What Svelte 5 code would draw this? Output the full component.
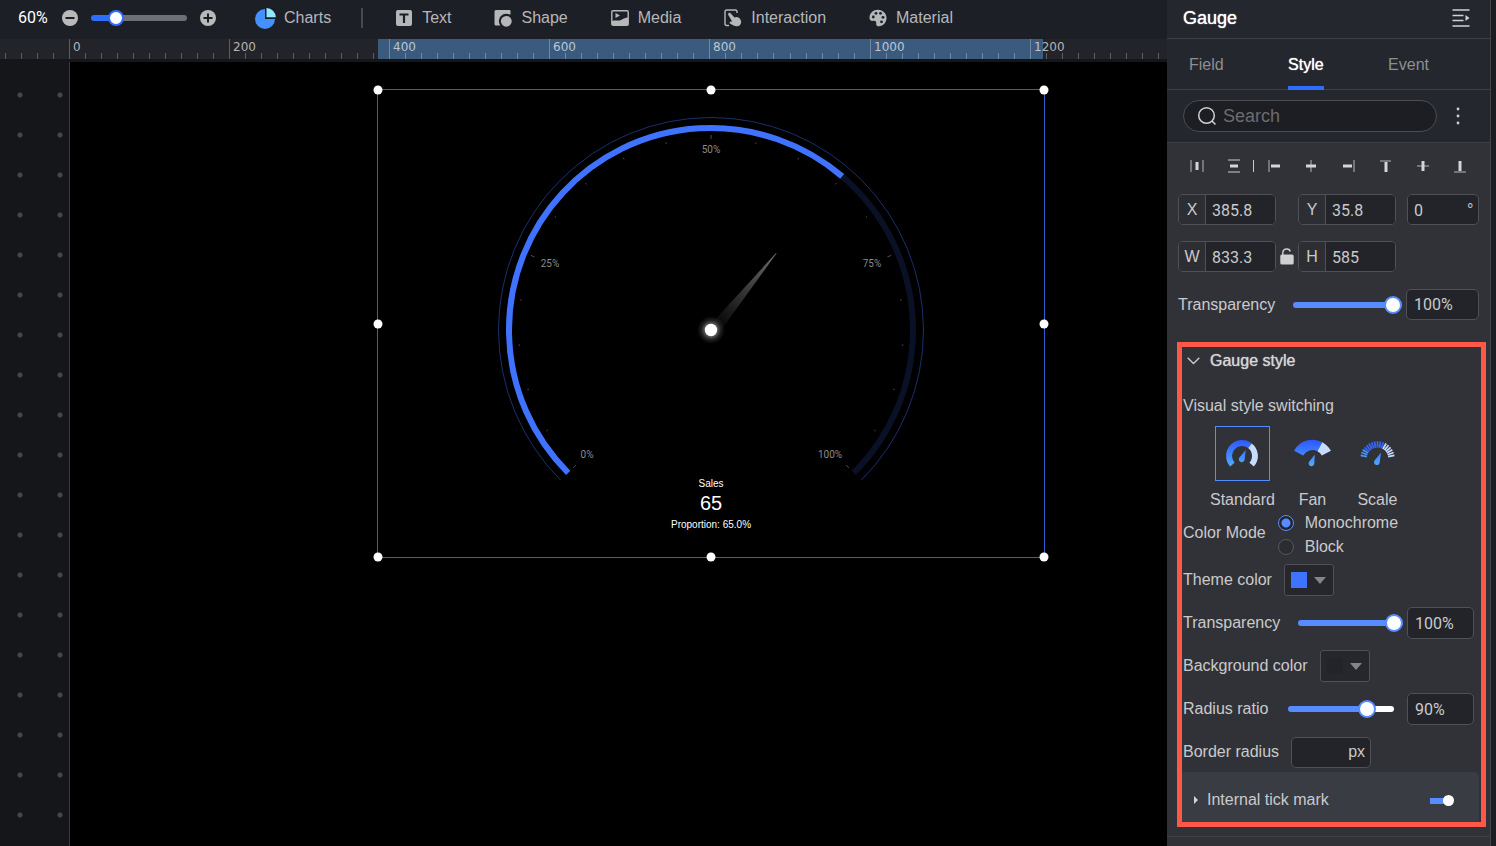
<script>
  let zoom = 60;
  let activeTab = "Style";
  let visualStyle = "Standard";
  let colorMode = "Monochrome";
  let opacity = 100;
  let gaugeOpacity = 100;
  let radiusRatio = 90;
  let tickMark = true;

  const tools = ["Text", "Shape", "Media", "Interaction", "Material"];
  const tabs = ["Field", "Style", "Event"];

  const rulerOrigin = 69;
  const rulerStep = 16;
  const rulerTicks = Array.from({ length: 74 }, (_, i) => i - 4);

  const handles = [
    [0, 0],
    [50, 0],
    [100, 0],
    [0, 50],
    [100, 50],
    [0, 100],
    [50, 100],
    [100, 100],
  ];

  const point = (cx, cy, r, deg) => {
    const a = (deg * Math.PI) / 180;
    return [cx + r * Math.sin(a), cy - r * Math.cos(a)];
  };

  // angles are clockwise from twelve o'clock
  const arc = (cx, cy, r, from, to) => {
    const [x1, y1] = point(cx, cy, r, from);
    const [x2, y2] = point(cx, cy, r, to);
    const large = to - from > 180 ? 1 : 0;
    return `M${x1} ${y1}A${r} ${r} 0 ${large} 1 ${x2} ${y2}`;
  };

  const spoke = (cx, cy, r1, r2, deg) => {
    const [x1, y1] = point(cx, cy, r1, deg);
    const [x2, y2] = point(cx, cy, r2, deg);
    return `M${x1} ${y1}L${x2} ${y2}`;
  };

  const sales = 65;
  const gaugeEnd = -135 + 270 * (sales / 100);
  const gaugeTicks = Array.from({ length: 21 }, (_, i) => i);
  const gaugeLabels = [
    { text: "0%", x: 209, y: 368 },
    { text: "25%", x: 172, y: 177 },
    { text: "50%", x: 333, y: 63 },
    { text: "75%", x: 494, y: 177 },
    { text: "100%", x: 452, y: 368 },
  ];

  const scaleTicks = Array.from({ length: 17 }, (_, i) => -80 + i * 10);

  const alignIcons = [
    { label: "Distribute horizontally", thin: "M3 3V15M15 3V15", thick: "M9 5V13" },
    { label: "Distribute vertically", thin: "M3 3H15M3 15H15", thick: "M5 9H13" },
    { label: "Align left", thin: "M4 3V15", thick: "M6 9H15" },
    { label: "Align center", thin: "M9 3V15", thick: "M4 9H14" },
    { label: "Align right", thin: "M15 3V15", thick: "M4 9H13" },
    { label: "Align top", thin: "M4 4H15", thick: "M10 5V15" },
    { label: "Align middle", thin: "M4 9H16", thick: "M10 4V14" },
    { label: "Align bottom", thin: "M4 15H16", thick: "M10 4V14" },
  ];

  const fill = (value, min, max) => (100 * (value - min)) / (max - min);
</script>

<div class="app">
  <main class="editor">
    <header class="toolbar">
      <output class="zoom-value">{zoom}%</output>
      <button type="button" class="zoom-btn" aria-label="Zoom out" on:click={() => (zoom = Math.max(10, zoom - 10))}>
        <svg width="16" height="16" viewBox="0 0 16 16">
          <circle cx="8" cy="8" r="8" fill="#b9b9ba" />
          <path d="M3.5 8H12.5" stroke="#1d1f27" stroke-width="2" />
        </svg>
      </button>
      <input
        class="slider zoom-slider"
        type="range"
        min="10"
        max="250"
        aria-label="Zoom"
        bind:value={zoom}
        style="--fill: {fill(zoom, 10, 250)}%"
      />
      <button type="button" class="zoom-btn" aria-label="Zoom in" on:click={() => (zoom = Math.min(250, zoom + 10))}>
        <svg width="16" height="16" viewBox="0 0 16 16">
          <circle cx="8" cy="8" r="8" fill="#b9b9ba" />
          <path d="M3.5 8H12.5M8 3.5V12.5" stroke="#1d1f27" stroke-width="2" />
        </svg>
      </button>

      <button type="button" class="tool charts">
        <svg width="21" height="21" viewBox="0 0 21 21">
          <path d="M10 1A10 10 0 1 0 20 11H10Z" fill="#4490ff" />
          <path d="M11.5 0A9.3 9.3 0 0 1 20.8 9.2H11.5Z" fill="#8feaff" />
        </svg>
        Charts
      </button>
      <span class="divider"></span>
      <nav class="tools">
        {#each tools as tool}
          <button type="button" class="tool">
            <svg width="18" height="18" viewBox="0 0 18 18" fill="#b6b7b9">
              {#if tool === "Text"}
                <rect x="1" y="1" width="16" height="16" rx="2" />
                <path d="M4.5 5.5H13.5M9 5V14" stroke="#1d1f27" stroke-width="2.2" />
              {:else if tool === "Shape"}
                <path d="M2 1H15.5Q16.5 1 16.5 2V5.5H11L6 16.5H2Q0.5 16.5 0.5 15V2.5Q0.5 1 2 1Z" />
                <circle cx="12" cy="12" r="7.2" fill="#1d1f27" />
                <circle cx="12.3" cy="12.3" r="5.4" />
              {:else if tool === "Media"}
                <rect x="0.8" y="1.8" width="16.4" height="14.4" rx="1.2" fill="none" stroke="#b6b7b9" stroke-width="1.4" />
                <path d="M1 12C5 10.5 7 12.5 10 11C13 9.5 14 8.5 17 8.5V16H1Z" />
                <path d="M4.5 4L9 6.5L4.5 9Z" />
              {:else if tool === "Interaction"}
                <path d="M13 4V2.5Q13 1 11.5 1H2.7Q1 1 1 2.7V14.5Q1 16.5 2.7 16.5H5" fill="none" stroke="#b6b7b9" stroke-width="1.4" />
                <path d="M4.5 4.2C5.5 3.2 6.7 4.2 7.2 5L10.5 8.5C13 7.2 15.5 8.5 16.7 11C17.6 13 17.3 14.8 15.8 16.2C14 17.8 11.5 17.5 9.5 16.6L6 14.4C5 13.3 6 12.3 7.5 12.6L8.3 12.8L4.6 6.6C4 5.6 4 4.8 4.5 4.2Z" />
              {:else}
                <path d="M9 0.8C4.2 0.8 0.5 4.2 0.5 8.5C0.5 11.2 2 12.2 4.2 11.8C6.2 11.3 7.6 12.4 7.2 14.2C6.8 16.3 8.2 17.5 10 17.3C14.3 16.8 17.5 13.5 17.5 9C17.5 4.4 13.8 0.8 9 0.8Z" />
                <g fill="#1d1f27">
                  <circle cx="4.3" cy="8" r="1.4" />
                  <circle cx="7" cy="4.3" r="1.4" />
                  <circle cx="11.5" cy="4.3" r="1.4" />
                  <circle cx="14" cy="8.3" r="1.4" />
                  <circle cx="12.5" cy="12.8" r="1.4" />
                </g>
              {/if}
            </svg>
            {tool}
          </button>
        {/each}
      </nav>
    </header>

    <svg class="ruler" width="100%" height="20">
      <rect x="378" y="0" width="665" height="20" fill="#3b5b7e" />
      {#each rulerTicks as tick}
        {@const x = rulerOrigin + tick * rulerStep + Math.round(tick / 90)}
        {#if tick % 10 === 0}
          <rect {x} y="0" width="1" height="20" class="ruler-tick" />
          <text x={x + 4} y="12">{tick * 20}</text>
        {:else}
          <rect {x} y="14" width="1" height="6" class="ruler-tick" />
        {/if}
      {/each}
    </svg>

    <div class="workspace">
      <div class="gutter"></div>
      <div class="stage">
        <div class="selection">
          <svg class="gauge" viewBox="0 0 666 467">
            <defs>
              <radialGradient id="hub-glow">
                <stop offset="0.4" stop-color="#fff" stop-opacity="0.4" />
                <stop offset="0.7" stop-color="#fff" stop-opacity="0.12" />
                <stop offset="1" stop-color="#fff" stop-opacity="0" />
              </radialGradient>
              <linearGradient id="needle" gradientUnits="userSpaceOnUse" x1="338" y1="234" x2="398" y2="164">
                <stop offset="0" stop-color="#050505" />
                <stop offset="1" stop-color="#6c6c6c" />
              </linearGradient>
            </defs>
            <path d={arc(333, 240, 212.5, -135, 135)} fill="none" stroke="#1b2f6e" />
            <path d={arc(333, 240, 202, -135, 135)} fill="none" stroke="#0a1026" stroke-width="6" />
            <path d={arc(333, 240, 202, -135, gaugeEnd)} fill="none" stroke="#3f73ff" stroke-width="6" />
            {#each gaugeTicks as t}
              <path
                d={spoke(333, 240, t % 5 === 0 ? 191 : 191.5, t % 5 === 0 ? 195 : 193, -135 + t * 13.5)}
                stroke={t % 5 === 0 ? "#4c4c4c" : "#555"}
              />
            {/each}
            {#each gaugeLabels as label}
              <text x={label.x} y={label.y} class="gauge-label">{label.text}</text>
            {/each}
            <path d="M398.5 163.5L398 163L334 233L343 240Z" fill="url(#needle)" />
            <circle cx="333" cy="240" r="14" fill="url(#hub-glow)" />
            <circle cx="333" cy="240" r="6.2" fill="#fff" />
            <text x="333" y="397" class="gauge-text">Sales</text>
            <text x="333" y="420" class="gauge-text value">{sales}</text>
            <text x="333" y="438" class="gauge-text">Proportion: {sales.toFixed(1)}%</text>
          </svg>
          {#each handles as [x, y]}
            <span class="handle" style="left: {x}%; top: {y}%"></span>
          {/each}
        </div>
      </div>
    </div>
  </main>

  <aside class="panel">
    <header class="panel-head">
      <h1>Gauge</h1>
      <button type="button" class="plain" aria-label="Collapse panel">
        <svg width="18" height="18" viewBox="0 0 18 18" fill="none" stroke="#d0d1d3" stroke-width="1.4">
          <path d="M0.5 1H17.5M0.5 6.5H11.5M0.5 11.5H11.5M0.5 17H17.5" />
          <path d="M13.5 6L17.5 9L13.5 12Z" fill="#d0d1d3" stroke="none" />
        </svg>
      </button>
    </header>

    <nav class="tabs">
      {#each tabs as tab}
        <button type="button" class:active={tab === activeTab} on:click={() => (activeTab = tab)}>{tab}</button>
      {/each}
    </nav>

    <div class="search-row">
      <label class="search">
        <svg width="20" height="20" viewBox="0 0 20 20" fill="none" stroke="#d0d1d3" stroke-width="1.5">
          <circle cx="9.5" cy="9.5" r="7.8" />
          <path d="M15 15L18.5 18.5" />
        </svg>
        <input type="text" placeholder="Search" aria-label="Search" />
      </label>
      <button type="button" class="plain" aria-label="More">
        <svg width="4" height="18" viewBox="0 0 4 18" fill="#d0d1d3">
          <circle cx="2" cy="2" r="1.4" />
          <circle cx="2" cy="9" r="1.4" />
          <circle cx="2" cy="16" r="1.4" />
        </svg>
      </button>
    </div>

    <div class="panel-body">
      <div class="align">
        {#each alignIcons as icon, i}
          {#if i === 2}
            <span class="align-divider"></span>
          {/if}
          <button type="button" aria-label={icon.label}>
            <svg width="18" height="18" viewBox="0 0 18 18" fill="none">
              <path d={icon.thin} stroke="#98999c" stroke-width="1.3" />
              <path d={icon.thick} stroke="#d4d5d7" stroke-width="3" />
            </svg>
          </button>
        {/each}
      </div>

      <div class="geometry">
        <label class="field"><span>X</span><input type="text" value="385.8" /></label>
        <span class="link"></span>
        <label class="field"><span>Y</span><input type="text" value="35.8" /></label>
        <label class="field angle"><input type="text" value="0" aria-label="Rotation" /><span class="unit">°</span></label>
      </div>
      <div class="geometry">
        <label class="field"><span>W</span><input type="text" value="833.3" /></label>
        <button type="button" class="link" aria-label="Lock ratio">
          <svg width="14" height="17" viewBox="0 0 14 17">
            <rect x="0.3" y="6.5" width="13.4" height="10" rx="1.5" fill="#cfd0d2" />
            <path d="M2.8 7V4.8C2.8 0.2 9.5 -0.3 10.2 3.5" fill="none" stroke="#cfd0d2" stroke-width="1.4" />
          </svg>
        </button>
        <label class="field"><span>H</span><input type="text" value="585" /></label>
      </div>

      <div class="row opacity-row">
        <label for="opacity">Transparency</label>
        <input
          id="opacity"
          class="slider"
          type="range"
          bind:value={opacity}
          style="--fill: {fill(opacity, 0, 100)}%"
        />
        <input class="box" type="text" aria-label="Transparency value" value="{opacity}%" />
      </div>

      <section class="gauge-style">
        <button type="button" class="section-title">
          <svg width="13" height="8" viewBox="0 0 13 8" fill="none" stroke="#c8c9cb" stroke-width="1.4">
            <path d="M0.7 0.8L6.5 6.6L12.3 0.8" />
          </svg>
          Gauge style
        </button>

        <fieldset>
          <legend>Visual style switching</legend>
          <div class="styles">
            <label class="style-option">
              <input type="radio" name="visual" value="Standard" bind:group={visualStyle} />
              <svg viewBox="0 0 54 54" width="55" height="55">
                <defs>
                  <linearGradient id="blue" gradientUnits="userSpaceOnUse" x1="0" y1="14" x2="0" y2="42">
                    <stop offset="0" stop-color="#2f59ff" />
                    <stop offset="1" stop-color="#4fb4ff" />
                  </linearGradient>
                </defs>
                <g fill="none" stroke-width="6">
                  <path d={arc(26.5, 29.5, 13.2, -132, 38)} stroke="url(#blue)" />
                  <path d={arc(26.5, 29.5, 13.2, 38, 132)} stroke="#c6dbff" />
                </g>
                <path d="M30.3 23.5L29.2 33A3 3 0 1 1 23.8 31Z" fill="url(#blue)" />
              </svg>
              Standard
            </label>
            <label class="style-option">
              <input type="radio" name="visual" value="Fan" bind:group={visualStyle} />
              <svg viewBox="0 0 54 54" width="55" height="55">
                <g fill="none" stroke-width="10.5">
                  <path d={arc(27, 34.2, 16, -62, 28)} stroke="url(#blue)" />
                  <path d={arc(27, 34.2, 16, 28, 62)} stroke="#c6dbff" />
                </g>
                <path d="M29.4 28L28.8 37.5A2.9 2.9 0 1 1 23.6 35.3Z" fill="url(#blue)" />
              </svg>
              Fan
            </label>
            <label class="style-option">
              <input type="radio" name="visual" value="Scale" bind:group={visualStyle} />
              <svg viewBox="0 0 54 54" width="55" height="55">
                {#each scaleTicks as deg}
                  <path
                    d={spoke(27, 32, 11, 17.5, deg)}
                    stroke={deg > 20 ? "#c6dbff" : Math.abs(deg) > 50 ? "#4496ff" : "#3466ff"}
                    stroke-width="1.8"
                  />
                {/each}
                <path d="M30.6 26L29.2 36.4A2.9 2.9 0 1 1 24 34.2Z" fill="url(#blue)" />
              </svg>
              Scale
            </label>
          </div>
        </fieldset>

        <div class="color-mode" role="radiogroup" aria-labelledby="color-mode">
          <span id="color-mode">Color Mode</span>
          <div class="radios">
            <label><input type="radio" name="mode" value="Monochrome" bind:group={colorMode} />Monochrome</label>
            <label><input type="radio" name="mode" value="Block" bind:group={colorMode} />Block</label>
          </div>
        </div>

        <div class="rows">
          <div class="row">
            <label for="theme-color">Theme color</label>
            <button type="button" id="theme-color" class="color">
              <span class="swatch theme"></span><span class="caret"></span>
            </button>
          </div>
          <div class="row">
            <label for="gauge-opacity">Transparency</label>
            <input
              id="gauge-opacity"
              class="slider"
              type="range"
              bind:value={gaugeOpacity}
              style="--fill: {fill(gaugeOpacity, 0, 100)}%"
            />
            <input class="box" type="text" aria-label="Gauge transparency value" value="{gaugeOpacity}%" />
          </div>
          <div class="row">
            <label for="background-color">Background color</label>
            <button type="button" id="background-color" class="color">
              <span class="swatch"></span><span class="caret"></span>
            </button>
          </div>
          <div class="row">
            <label for="radius-ratio">Radius ratio</label>
            <input
              id="radius-ratio"
              class="slider ratio"
              type="range"
              min="50"
              max="100"
              bind:value={radiusRatio}
              style="--fill: {fill(radiusRatio, 50, 100)}%"
            />
            <input class="box" type="text" aria-label="Radius ratio value" value="{radiusRatio}%" />
          </div>
          <div class="row">
            <label for="border-radius">Border radius</label>
            <div class="px-field">
              <input id="border-radius" type="text" />
              <span>px</span>
            </div>
          </div>
        </div>

        <div class="tick-row">
          <span class="arrow"></span>
          <label for="tick-mark">Internal tick mark</label>
          <input id="tick-mark" class="switch" type="checkbox" role="switch" bind:checked={tickMark} />
        </div>
      </section>
      <div class="section-end"></div>
    </div>
  </aside>
</div>

<style>
  :global(body) {
    margin: 0;
    background: #1c1d22;
  }

  .app {
    display: flex;
    height: 100vh;
    overflow: hidden;
    padding-right: 5px;
    font-family: "Liberation Sans", Arial, sans-serif;
    font-size: 16px;
    line-height: 18px;
    color: #c9cacc;
  }

  .app * {
    box-sizing: border-box;
  }

  button,
  input {
    font: inherit;
    color: inherit;
  }

  button {
    display: flex;
    align-items: center;
    padding: 0;
    border: none;
    background: none;
    cursor: pointer;
  }

  svg {
    display: block;
    flex-shrink: 0;
  }

  .editor {
    display: flex;
    flex-direction: column;
    flex: 1;
    min-width: 0;
    background: #151619;
  }

  .toolbar {
    display: flex;
    align-items: center;
    height: 39px;
    padding: 0 18px 3px;
    background: #1d1f27;
    color: #b6b7b9;
  }

  .zoom-value {
    width: 44px;
    font-family: Roboto, sans-serif;
    color: #fff;
  }

  .slider {
    --accent: #568cff;
    --rest: #fff;
    --thumb: 18px;
    flex: 1;
    min-width: 0;
    height: 18px;
    margin: 0 4px 0 18px;
    appearance: none;
    background: none;
  }

  .slider::-webkit-slider-runnable-track {
    height: 6px;
    border-radius: 3px;
    background: linear-gradient(to right, var(--accent) var(--fill), var(--rest) var(--fill));
  }

  .slider::-webkit-slider-thumb {
    appearance: none;
    width: var(--thumb);
    height: var(--thumb);
    margin-top: calc(3px - var(--thumb) / 2);
    border: 2px solid var(--accent);
    border-radius: 50%;
    background: #fff;
  }

  .slider.ratio {
    margin: 0 13px 0 20px;
  }

  .slider.zoom-slider {
    --accent: #2f6dff;
    --rest: #6c6e78;
    --thumb: 16px;
    flex: none;
    width: 96px;
    margin: 0 13px;
  }

  .tool {
    gap: 9px;
    white-space: nowrap;
  }

  .charts {
    gap: 8px;
    margin-left: 39px;
  }

  .divider {
    width: 2px;
    height: 20px;
    margin: 0 32px 0 30px;
    background: #484950;
  }

  .tools {
    display: flex;
    gap: 43px;
  }

  .ruler {
    background: #232429;
  }

  .ruler text {
    font-family: "DejaVu Sans", sans-serif;
    font-size: 12px;
    fill: rgba(255, 255, 255, 0.66);
  }

  .ruler-tick {
    fill: rgba(255, 255, 255, 0.27);
  }

  .workspace {
    display: flex;
    flex: 1;
    padding-top: 3px;
  }

  .gutter {
    width: 70px;
    border-right: 1px solid #3a3b3e;
    background: radial-gradient(circle, #45464f 2px, transparent 3px) 0 13px / 40px 40px;
  }

  .stage {
    position: relative;
    flex: 1;
    background: #000;
  }

  .selection {
    position: absolute;
    left: 307px;
    top: 27px;
    width: 668px;
    height: 469px;
    border: 1px solid #2b60d3;
  }

  .gauge {
    width: 100%;
    height: 100%;
  }

  .gauge-label {
    font-family: Roboto, sans-serif;
    font-size: 10px;
    fill: #8a8a8a;
    text-anchor: middle;
  }

  .gauge-text {
    font-size: 10px;
    fill: #fff;
    text-anchor: middle;
  }

  .gauge-text.value {
    font-size: 20px;
  }

  .handle {
    position: absolute;
    width: 9px;
    height: 9px;
    border-radius: 50%;
    background: #fff;
    transform: translate(-50%, -50%);
  }

  .panel {
    display: flex;
    flex-direction: column;
    width: 324px;
    border-right: 1px solid #44454a;
    background: #25272e;
  }

  .panel-head {
    display: flex;
    align-items: center;
    justify-content: space-between;
    height: 39px;
    padding: 0 20px 2px 16px;
    border-bottom: 1px solid #3e3f44;
  }

  h1 {
    margin: 0;
    font-size: 18px;
    font-weight: 400;
    color: #fff;
    text-shadow: 0 0 1px #fff;
  }

  .tabs {
    display: flex;
    justify-content: space-between;
    height: 51px;
    padding: 0 61px 0 22px;
    border-bottom: 1px solid #3e3f44;
    color: #8d8e92;
  }

  .tabs button {
    height: 51px;
    border-bottom: 4px solid transparent;
    border-top: 4px solid transparent;
  }

  .tabs button.active {
    border-bottom-color: #2f6dff;
    color: #fff;
    text-shadow: 0 0 1px #fff;
  }

  .search-row {
    display: flex;
    align-items: center;
    gap: 19px;
    height: 53px;
    padding: 0 30px 0 16px;
    border-bottom: 1px solid #3e3f44;
  }

  .search {
    display: flex;
    align-items: center;
    flex: 1;
    min-width: 0;
    gap: 6px;
    height: 32px;
    padding: 0 13px;
    border: 1px solid #4b4c51;
    border-radius: 16px;
    background: #1d1e23;
  }

  .search input {
    flex: 1;
    min-width: 0;
    padding: 0;
    border: none;
    outline: none;
    background: none;
    font-size: 18px;
  }

  .search input::placeholder {
    color: #6b6c70;
  }

  .panel-body {
    flex: 1;
    background: #313237;
  }

  .align {
    display: flex;
    align-items: center;
    height: 47px;
    padding: 0 0 1px 11px;
  }

  .align button {
    justify-content: center;
    width: 37px;
    height: 24px;
  }

  .align-divider {
    width: 1px;
    height: 12px;
    margin: 0 1px;
    background: #c9cacc;
  }

  .geometry {
    display: flex;
    height: 31px;
    margin: 4px 11px 16px;
  }

  .field {
    display: flex;
    width: 98px;
    border: 1px solid #505156;
    border-radius: 5px;
    background: #232429;
    overflow: hidden;
    line-height: 29px;
  }

  .field span {
    width: 27px;
    border-right: 1px solid #505156;
    background: #2d2e33;
    text-align: center;
  }

  .field input,
  .box {
    min-width: 0;
    padding: 2px 0 0 6px;
    border: none;
    background: #232429;
    font-family: Roboto, sans-serif;
  }

  .field input {
    flex: 1;
  }

  .field.angle {
    width: 72px;
    margin-left: 11px;
  }

  .field .unit {
    width: 11px;
    border: none;
    background: none;
    text-align: left;
  }

  .link {
    justify-content: center;
    width: 22px;
  }

  .row {
    display: flex;
    align-items: center;
    height: 32px;
  }

  .opacity-row {
    margin: 0 11px 22px;
    padding-top: 1px;
  }

  .box {
    width: 67px;
    height: 32px;
    padding: 0 0 0 7px;
    border: 1px solid #505156;
    border-radius: 5px;
  }

  .opacity-row .box {
    width: 73px;
    height: 31px;
  }

  .gauge-style {
    margin: 0 4px 9px 10px;
    border: 5px solid #ff5748;
  }

  .section-end {
    border-top: 1px solid #3e3f44;
  }

  .section-title {
    gap: 10px;
    height: 27px;
    padding-left: 5px;
    color: #d4d5d7;
    text-shadow: 0 0 1px #d4d5d7;
  }

  fieldset {
    margin: 23px 0 0;
    padding: 0 0 0 1px;
    border: none;
  }

  legend {
    padding: 0;
  }

  .styles {
    display: flex;
    gap: 10px;
    padding: 11px 0 0 27px;
  }

  .style-option {
    display: flex;
    flex-direction: column;
    align-items: center;
    gap: 10px;
    min-width: 55px;
  }

  .style-option input {
    position: absolute;
    opacity: 0;
  }

  .style-option svg {
    border: 1px solid transparent;
  }

  .style-option input:checked + svg {
    border-color: #568cff;
  }

  .color-mode {
    display: flex;
    gap: 12px;
    margin-top: 2px;
    padding-left: 1px;
    line-height: 44px;
  }

  .radios label {
    display: flex;
    align-items: center;
    gap: 11px;
    height: 24px;
    line-height: 24px;
  }

  .radios input {
    appearance: none;
    width: 16px;
    height: 16px;
    margin: 0;
    border: 1px solid #56575c;
    border-radius: 50%;
    background: #2b2c31;
  }

  .radios input:checked {
    border-color: #568cff;
    background: radial-gradient(circle, #568cff 4px, #232429 5px);
  }

  .rows {
    display: flex;
    flex-direction: column;
    gap: 11px;
    padding: 5px 7px 4px 1px;
  }

  .color {
    justify-content: space-between;
    width: 50px;
    height: 32px;
    margin-left: 12px;
    padding: 0 7px 0 6px;
    border: 1px solid #505156;
    border-radius: 3px;
    background: #26272c;
  }

  .swatch {
    width: 16px;
    height: 16px;
    background: #232429;
  }

  .theme {
    background: #3f73ff;
  }

  .caret {
    border: 6px solid transparent;
    border-top: 7px solid #82848f;
    border-bottom: 0;
  }

  .px-field {
    display: flex;
    align-items: center;
    width: 80px;
    height: 31px;
    margin-left: 12px;
    padding: 0 5px;
    border: 1px solid #505156;
    border-radius: 5px;
    background: #232429;
  }

  .px-field input {
    flex: 1;
    min-width: 0;
    padding: 0;
    border: none;
    background: none;
  }

  .tick-row {
    display: flex;
    align-items: center;
    height: 50px;
    margin-right: 2px;
    padding: 5px 25px 0 12px;
    border-radius: 0 5px 0 0;
    background: #3a3c43;
  }

  .arrow {
    margin-right: 9px;
    border: 4px solid transparent;
    border-left-color: #d4d5d7;
    border-right: 0;
  }

  .switch {
    display: flex;
    align-items: center;
    appearance: none;
    width: 24px;
    height: 11px;
    margin: 2px 0 0 auto;
    background: linear-gradient(#568cff, #568cff) 0 center / 20px 6px no-repeat;
    border-radius: 3px;
  }

  .switch::after {
    content: "";
    width: 11px;
    height: 11px;
    border-radius: 50%;
    background: #fff;
  }

  .switch:checked::after {
    margin-left: 13px;
  }
</style>
